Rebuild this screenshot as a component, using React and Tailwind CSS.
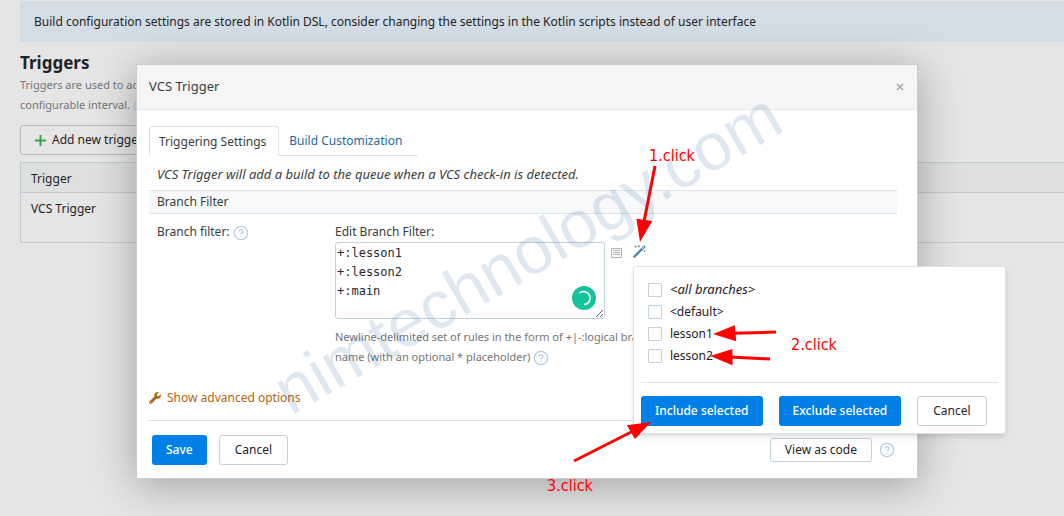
import React from 'react';
import { CircleQuestionMark } from 'lucide-react';
import { FaWrench } from 'react-icons/fa';

const branches = [
  { id: 'all', label: '<all branches>', italic: true },
  { id: 'default', label: '<default>' },
  { id: 'lesson1', label: 'lesson1' },
  { id: 'lesson2', label: 'lesson2' },
];

const arrows = [
  { from: [655, 166], to: [640, 242] },
  { from: [776, 332], to: [713, 334] },
  { from: [770, 359], to: [710, 356] },
  { from: [574, 461], to: [651, 422] },
];

function HelpLink() {
  return (
    <a href="#help" aria-label="Help" className="inline-block align-middle text-[#b5d0e6]">
      <CircleQuestionMark className="w-4 h-4" strokeWidth={2} />
    </a>
  );
}

function WandIcon() {
  return (
    <svg viewBox="0 0 13 13" className="w-[13px] h-[13px]" fill="none" stroke="#5888aa">
      <path d="M1.3 11.7L8.4 4.6" strokeWidth="2.4" strokeLinecap="round" />
      <path d="M8.6 4.4L11.2 1.8" strokeWidth="2.6" strokeLinecap="round" />
      <path d="M9 4L11 2" stroke="white" strokeWidth="0.9" />
      <path d="M2.5 .6v2M1.5 1.6h2M6 0v2.4M4.8 1.2h2.4M11.6 5v2M10.6 6h2" strokeWidth="0.8" />
    </svg>
  );
}

function Button({ primary, children }) {
  return (
    <button
      type="button"
      className={
        primary
          ? 'h-[30px] px-3.5 rounded-[3px] bg-[#0080e6] text-white font-medium whitespace-nowrap'
          : 'h-[30px] px-[15px] rounded-[3px] border border-[#c3d1db] bg-white text-[#1f2326] whitespace-nowrap'
      }
    >
      {children}
    </button>
  );
}

function Arrow({ from, to }) {
  const angle = Math.atan2(to[1] - from[1], to[0] - from[0]);
  const length = Math.hypot(to[0] - from[0], to[1] - from[1]);
  return (
    <g transform={`translate(${from[0]} ${from[1]}) rotate(${(angle * 180) / Math.PI})`} fill="#ff0000">
      <rect x="0" y="-1.5" width={length - 20} height="3" />
      <path d={`M${length} 0 L${length - 23} -8 L${length - 22} 8 Z`} />
    </g>
  );
}

function TriggersPage() {
  return (
    <main className="pl-5 pt-px overflow-hidden">
      <div className="h-[41px] flex items-center px-3.5 bg-[#d3dde5]">
        Build configuration settings are stored in Kotlin DSL, consider changing the settings in the Kotlin scripts instead of user interface
      </div>
      <h1 className="mt-[9px] text-[17px] leading-6 font-bold">Triggers</h1>
      <p className="text-[11px] leading-5 text-[#737577]">
        Triggers are used to add
        <br />
        configurable interval. <HelpLink />
      </p>
      <button type="button" className="mt-2.5 h-[30px] px-3.5 flex items-center gap-1.5 border border-[#afbdc9] rounded-[3px]">
        <svg viewBox="0 0 11 11" className="w-[11px] h-[11px]">
          <path d="M5.5 0v11M0 5.5h11" stroke="#2fa84f" strokeWidth="2" />
        </svg>
        Add new trigger
      </button>
      <table className="mt-[7px] w-[120%] border border-[#c3cbd5] text-left">
        <thead>
          <tr className="h-[30px] bg-[#dee0df] border-b border-[#c3cbd5]">
            <th className="px-2.5 pt-0.5 font-normal">Trigger</th>
          </tr>
        </thead>
        <tbody>
          <tr className="h-[50px]">
            <td className="px-2.5 pt-[7px] align-top">VCS Trigger</td>
          </tr>
        </tbody>
      </table>
    </main>
  );
}

function BranchPopup() {
  return (
    <div className="absolute left-[633px] top-[266px] w-[373px] px-[7px] pt-3 pb-[7px] bg-white border border-[#dce3ea] rounded-[3px] shadow-md">
      <div className="pl-[7px]">
        {branches.map((branch) => (
          <label key={branch.id} className="flex items-center gap-2 h-[22px]">
            <input type="checkbox" className="appearance-none w-3.5 h-3.5 border border-[#c3d1db] rounded-[1px] bg-white" />
            <span className={branch.italic ? 'italic text-[13px]' : ''}>{branch.label}</span>
          </label>
        ))}
      </div>
      <div className="mt-[15px] pt-[13px] border-t border-[#dce3ea] flex gap-4">
        <Button primary>Include selected</Button>
        <Button primary>Exclude selected</Button>
        <Button>Cancel</Button>
      </div>
    </div>
  );
}

function TriggerDialog() {
  return (
    <div role="dialog" aria-label="VCS Trigger" className="bg-white border border-[#cccccc] shadow-[0_6px_40px_rgba(0,0,0,0.3)] text-[#3a3d40]">
      <header className="h-[45px] pl-3 pr-3 flex items-center justify-between bg-[#f5f5f5] border-b border-[#e8eaec]">
        <h2 className="text-[13px]">VCS Trigger</h2>
        <button type="button" aria-label="Close" className="text-[#a8a8a8]">
          <svg viewBox="0 0 8 8" className="w-2 h-2 mr-px">
            <path d="M1 1l6 6M7 1l-6 6" stroke="currentColor" strokeWidth="1.5" />
          </svg>
        </button>
      </header>
      <div className="pl-3 pr-5 pt-4 pb-[13px]">
        <div role="tablist" className="flex h-[30px]">
          <button type="button" role="tab" aria-selected="true" className="pl-[9px] pr-3 border border-b-0 border-[#dce3ea] rounded-t-[3px]">
            Triggering Settings
          </button>
          <button type="button" role="tab" aria-selected="false" className="pl-2.5 pr-4 border-b border-[#dce3ea] text-[#26699e]">
            Build Customization
          </button>
        </div>
        <p className="px-2 mt-2 mb-1.5 text-[13px] leading-5 italic">VCS Trigger will add a build to the queue when a VCS check-in is detected.</p>
        <h3 className="px-2 h-6 flex items-center bg-[#f7f9fb] border-y border-[#dce3ea]">Branch Filter</h3>
        <div className="px-2 mt-2 flex">
          <div className="w-[178px] leading-5">
            Branch filter: <HelpLink />
          </div>
          <div className="w-[310px]">
            <label htmlFor="filter" className="block leading-5">Edit Branch Filter:</label>
            <div className="flex items-start">
              <div className="relative w-[270px] shrink-0">
                <textarea
                  id="filter"
                  defaultValue={'+:lesson1\n+:lesson2\n+:main'}
                  className="block w-full h-[77px] pl-px pt-px border border-[#c3d1db] rounded-[3px] font-['DejaVu_Sans_Mono',monospace] text-[12px] leading-[19px] text-[#26292c]"
                />
                <span className="absolute right-[9px] bottom-[9px] w-6 h-6 rounded-full bg-[#15c39a]">
                  <svg viewBox="0 0 24 24" fill="none" stroke="white" strokeWidth="1.6">
                    <path d="M7.500 7a6.500 6.500 0 1 1 4.500 11.500" />
                  </svg>
                </span>
              </div>
              <svg viewBox="0 0 11 10" className="w-[11px] h-2.5 ml-1.5 mt-1.5 shrink-0" fill="none" stroke="#b0b0b0">
                <path d="M.5.5h10v9H.5zM2 2.5h7M2 4.5h7M2 6.5h7" />
              </svg>
              <button type="button" aria-label="Select branches" className="ml-[11px] mt-[3px] shrink-0">
                <WandIcon />
              </button>
            </div>
            <p className="mt-2 text-[11px] leading-5 text-[#737577]">
              <span className="whitespace-nowrap">Newline-delimited set of rules in the form of +|-:logical branch</span>
              <br />
              name (with an optional * placeholder) <HelpLink />
            </p>
          </div>
        </div>
        <a href="#advanced" className="mt-[21px] flex items-center gap-1.5 leading-5 text-[#b3640d]">
          <FaWrench className="w-3 h-3" />
          Show advanced options
        </a>
        <footer className="mt-3 pt-3.5 pl-[3px] flex items-center justify-between border-t border-[#dce3ea]">
          <div className="flex gap-3">
            <Button primary>Save</Button>
            <Button>Cancel</Button>
          </div>
          <div className="flex items-center gap-[7px] pr-0.5">
            <button type="button" className="h-6 px-3.5 border border-[#c3d1db] rounded-[3px] text-[#1f2326]">View as code</button>
            <HelpLink />
          </div>
        </footer>
      </div>
    </div>
  );
}

export default function App() {
  return (
    <div className="relative min-h-screen overflow-hidden bg-[#e5e5e5] font-['Noto_Sans',sans-serif] text-[12px] text-[#1f2326]">
      <TriggersPage />
      <div className="absolute inset-x-0 top-16 pl-34 pr-[146px]">
        <TriggerDialog />
      </div>
      <BranchPopup />

      {/* Annotations */}
      <svg className="absolute left-0 top-0 w-[1064px] h-[516px] pointer-events-none" viewBox="0 0 1064 516">
        {arrows.map((arrow, index) => (
          <Arrow key={index} {...arrow} />
        ))}
        <text x="291" y="416" transform="rotate(-30 291 416)" fontSize="67" fill="#1c5a9c" fillOpacity="0.14" fontFamily="Liberation Sans, sans-serif">
          nimtechnology.com
        </text>
      </svg>
      <div className="pointer-events-none font-['DejaVu_Sans_Condensed','DejaVu_Sans',sans-serif] text-[16px] leading-5 text-[#ff0000]">
        <span className="absolute left-[649px] top-[146px]">1.click</span>
        <span className="absolute left-[791px] top-[335px]">2.click</span>
        <span className="absolute left-[547px] top-[476px]">3.click</span>
      </div>
    </div>
  );
}
